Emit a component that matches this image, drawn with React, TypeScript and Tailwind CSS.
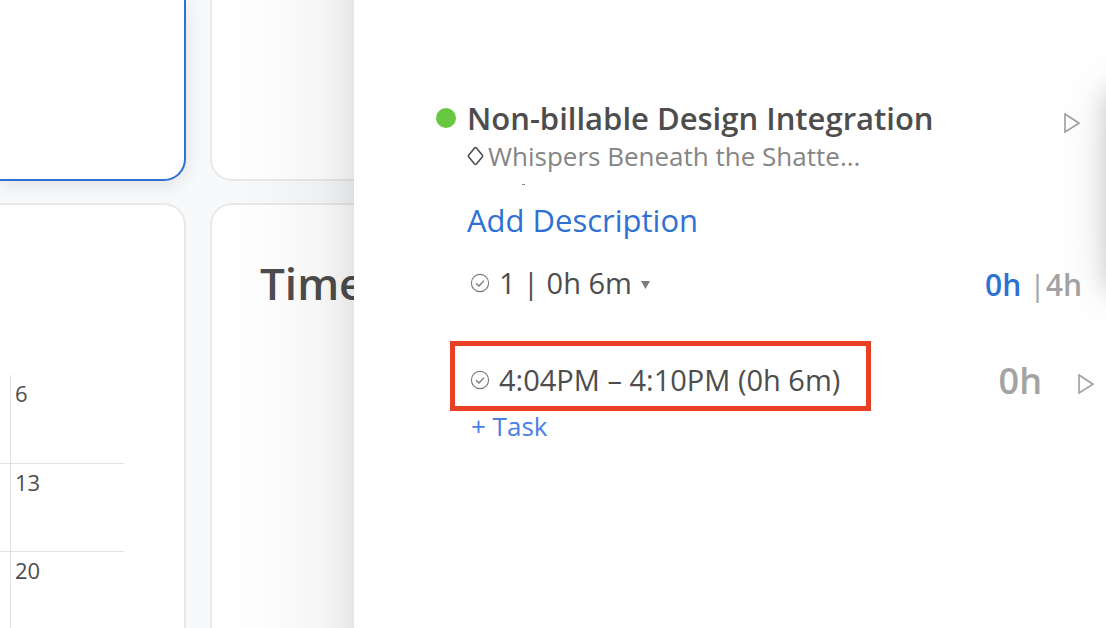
import { ReactNode } from "react";

const days = [6, 13, 20];

function CheckCircle() {
  return (
    <svg className="w-5 h-5 shrink-0" viewBox="0 0 20 20" fill="none" stroke="#777777" aria-hidden="true">
      <circle cx="10" cy="10" r="8.6" strokeWidth={1.1} />
      <path d="M6 10.2L9 13L14 7.6" strokeWidth={1.3} />
    </svg>
  );
}

function PlayButton({ label }: { label: string }) {
  return (
    <button type="button" aria-label={label} className="shrink-0">
      <svg className="block w-4 h-5" viewBox="0 0 16 20" fill="none" aria-hidden="true">
        <path d="M1 1L15 10.2L1 19Z" stroke="#a3a3a3" strokeWidth={1.7} />
      </svg>
    </button>
  );
}

function Card({ className, children }: { className: string; children?: ReactNode }) {
  return <div className={`bg-white border-2 ${className}`}>{children}</div>;
}

export default function App() {
  return (
    <div className="relative flex h-screen overflow-hidden bg-[#f8f9fb] font-['Open_Sans',sans-serif] text-[#4d4d4d]">
      {/* Dashboard */}
      <main className="flex w-[354px] shrink-0 gap-6 overflow-hidden">
        <div className="flex w-[186px] shrink-0 flex-col gap-[22px]">
          <Card className="h-[181px] shrink-0 border-t-0 border-l-0 border-[#2e71d3] rounded-br-[22px] shadow-[0_4px_20px_rgba(0,0,0,0.1)]" />
          <Card className="flex-1 min-h-0 overflow-hidden border-l-0 border-b-0 border-[#e8e9ea] rounded-tr-[22px] pt-[170px]">
            <table className="w-[124px] border-separate border-spacing-0 text-[22px] leading-7">
              <tbody>
                {days.map((day, i) => (
                  <tr key={day} className="h-[88px] align-top">
                    <td className={`w-[10px] p-0 border-[#e2e2e2] ${i > 0 ? "border-t" : ""}`} />
                    <td className={`p-0 pt-1 pl-1 border-l border-[#e2e2e2] ${i > 0 ? "border-t" : ""}`}>{day}</td>
                  </tr>
                ))}
              </tbody>
            </table>
          </Card>
        </div>
        <div className="flex flex-1 flex-col gap-[22px]">
          <Card className="h-[181px] shrink-0 border-t-0 border-r-0 border-[#e8e9ea] rounded-bl-[22px]" />
          <Card className="flex-1 border-b-0 border-r-0 border-[#e8e9ea] rounded-tl-[22px] pt-12 pl-12">
            <h2 className="text-[44px] leading-[60px] font-semibold">Time</h2>
          </Card>
        </div>
      </main>

      {/* Task drawer */}
      <aside className="relative flex-1 min-w-0 bg-white pt-[98px]">
        <div className="absolute inset-y-0 right-full w-[140px] pointer-events-none bg-[linear-gradient(to_left,rgba(0,0,0,0.1)_0%,rgba(0,0,0,0.065)_10%,rgba(0,0,0,0.04)_22%,rgba(0,0,0,0.024)_42%,rgba(0,0,0,0.008)_70%,transparent_100%)]" />

        <div className="flex h-10 pl-[82px] pr-[26px]">
          <span className="w-5 h-5 mt-[10px] shrink-0 rounded-full bg-[#67c83f]" />
          <h1 className="flex-1 pl-[11px] text-[31px] leading-10 font-semibold whitespace-nowrap">
            Non-billable Design Integration
          </h1>
          <div className="pt-[15px]">
            <PlayButton label="Start timer" />
          </div>
        </div>

        <div className="flex items-center gap-1 pl-[113px] text-[26px] leading-9 text-[#858585]">
          <svg className="w-[17px] h-5 shrink-0" viewBox="0 0 17 20" fill="none" aria-hidden="true">
            <path d="M7.6 2Q8.5 1 9.4 2L15.4 9.2Q16 10 15.4 10.8L9.4 18Q8.5 19 7.6 18L1.6 10.8Q1 10 1.6 9.2Z" stroke="#4d4d4d" strokeWidth={1.6} />
          </svg>
          <p className="whitespace-nowrap">Whispers Beneath the Shatte...</p>
        </div>
        <div className="h-[26px] pl-[168px] pt-[10px]">
          <div className="w-[3px] h-px bg-[#858585]" />
        </div>

        <button type="button" className="block ml-[113px] text-[31px] leading-10 text-[#2e71d3]">
          Add Description
        </button>

        <div className="flex items-center mt-[22px] h-[42px] pl-[116px] pr-6">
          <button type="button" className="flex items-center gap-[9px] text-[29px] leading-10">
            <CheckCircle />
            <span>1 | 0h 6m</span>
            <svg className="w-[9px] h-2 mt-1" viewBox="0 0 9 8" fill="#7d7d7d" aria-hidden="true">
              <path d="M0 0H9L4.5 8Z" />
            </svg>
          </button>
          <p className="flex ml-auto pt-1 text-[30px] leading-10 font-semibold text-[#a3a3a3]">
            <span className="text-[#2e71d3]">0h</span>
            <span className="pl-2 font-normal">|</span>
            <span>4h</span>
          </p>
        </div>

        <div className="flex items-center mt-[37px] pl-24 pr-3">
          <div className="flex items-center gap-[9px] w-[421px] h-[70px] pl-[15px] pt-2 border-5 border-[#ea3f27] text-[29px] leading-10 whitespace-nowrap">
            <CheckCircle />
            <span>4:04PM – 4:10PM (0h 6m)</span>
          </div>
          <span className="ml-auto mr-9 pt-[10px] text-4xl font-semibold text-[#a3a3a3]">0h</span>
          <div className="pt-[22px]">
            <PlayButton label="Start session timer" />
          </div>
        </div>

        <button type="button" className="block ml-[117px] text-[26px] leading-[30px] text-[#4a80e6]">
          + Task
        </button>
      </aside>

      {/* Shadow of the panel that sits past the right edge */}
      <div className="absolute left-full top-[90px] w-20 h-[200px] shadow-[0_0_50px_rgba(0,0,0,0.14),0_0_20px_rgba(0,0,0,0.12)]" />
    </div>
  );
}
